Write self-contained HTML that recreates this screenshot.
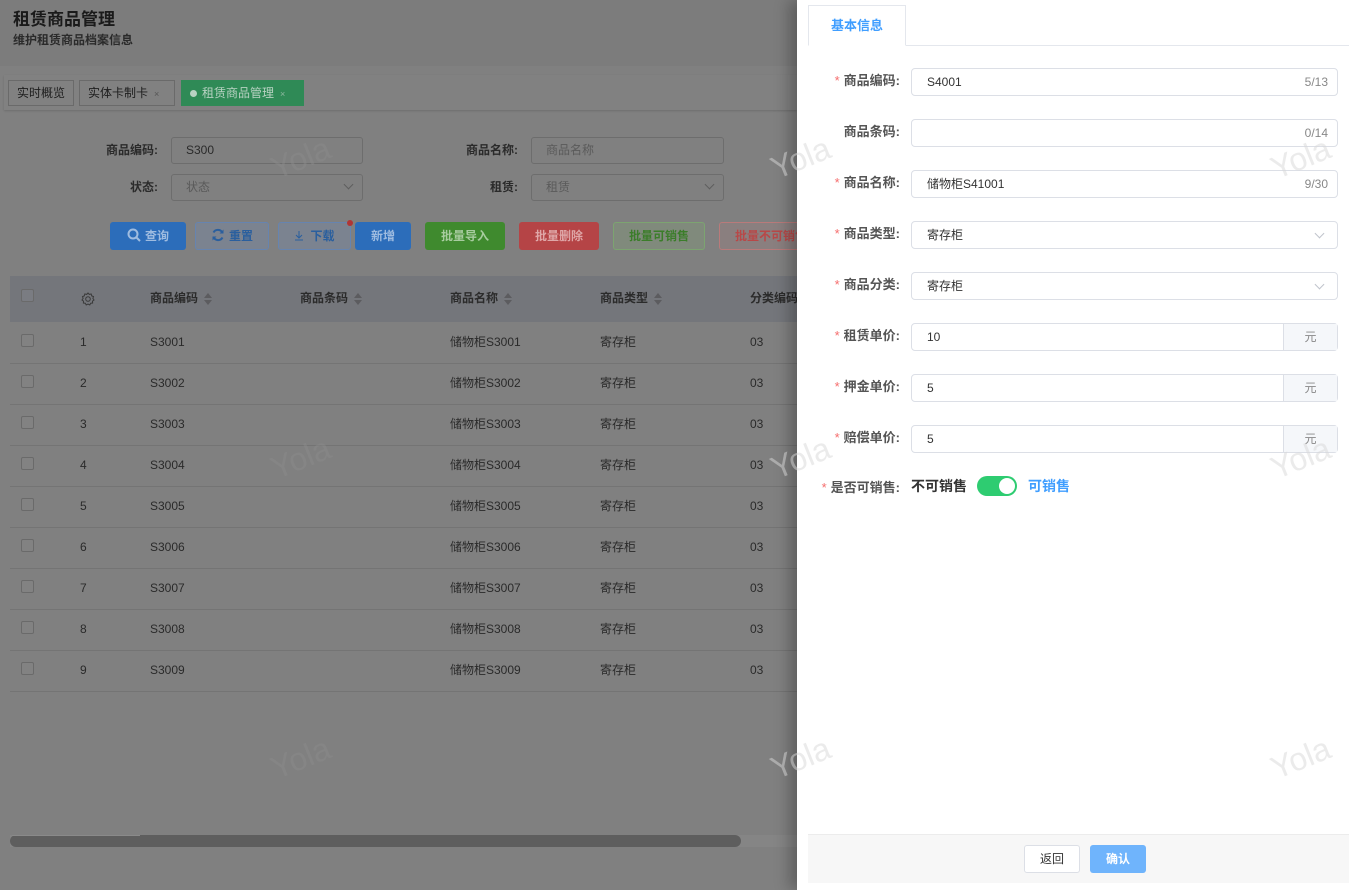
<!DOCTYPE html>
<html><head><meta charset="utf-8">
<style>
*{box-sizing:border-box;margin:0;padding:0}
body{width:1349px;height:890px;overflow:hidden;background:#808080;font-family:"Liberation Sans","Noto Sans CJK SC",sans-serif;position:relative;color:#222}
.a{position:absolute}
.hdr{left:0;top:0;width:797px;height:66px;background:#7c7c7c}
.t1{left:13px;top:9px;font-size:17px;line-height:22px;font-weight:bold;color:#1a1a1a}
.t2{left:13px;top:33px;font-size:12px;line-height:14px;font-weight:bold;color:#2a2a2a}
.tabbar{left:4px;top:75px;width:793px;height:35px;background:#818181;box-shadow:0 1px 2px rgba(0,0,0,.15)}
.tab{top:80px;height:26px;border:1px solid #6a6a6a;font-size:12px;line-height:24px;padding-left:8px;color:#1e1e1e}
.tab .x{font-size:9px;color:#555;margin-left:6px}
.lbl{font-size:12px;line-height:14px;font-weight:bold;color:#2a2a2a;text-align:right;width:80px}
.inp{height:27px;border:1px solid #6d6d6d;border-radius:3px;font-size:12px;line-height:25px;padding-left:14px;color:#2a2a2a}
.ph{color:#5a5a5a}
.chev{position:absolute;right:10px;top:6px;width:7px;height:7px;border-right:1px solid #5e5e5e;border-bottom:1px solid #5e5e5e;transform:rotate(45deg)}
.btn{top:222px;height:28px;border-radius:3px;font-size:12px;font-weight:bold;line-height:26px;text-align:center;border:1px solid transparent}
.th{top:276px;left:10px;width:787px;height:46px;background:#74767b}
.col{font-size:12px;line-height:14px;height:14px;color:#2a2a2a;white-space:nowrap}
.hc{top:291px;font-size:12px;line-height:14px;font-weight:bold;color:#2b2b2b}
.sort{display:inline-block;vertical-align:middle;margin-left:6px;width:8px;height:12px;position:relative}
.sort:before,.sort:after{content:"";position:absolute;left:0;border-left:4px solid transparent;border-right:4px solid transparent}
.sort:before{top:0;border-bottom:5px solid #5c5c5f}
.sort:after{bottom:0;border-top:5px solid #5c5c5f}
.cb{width:13px;height:13px;border:1px solid #6a6a6a;border-radius:2px;background:#828282}
.rl{left:10px;width:787px;height:1px;background:#747474}
.wm{font-size:32px;line-height:36px;color:rgba(140,140,140,.45);transform:rotate(-22deg);font-family:"Liberation Sans",sans-serif}
.drawer{left:797px;top:0;width:552px;height:890px;background:#fff;box-shadow:-8px 0 14px rgba(0,0,0,.25)}
.fl{font-size:13px;line-height:16px;font-weight:bold;color:#555;text-align:right;width:110px;left:790px}
.fl b{color:#f56c6c;font-weight:normal;margin-right:4px}
.fi{left:911px;width:427px;height:28px;border:1px solid #dcdfe6;border-radius:4px;font-size:12px;line-height:26px;padding-left:15px;color:#333;background:#fff}
.cnt{position:absolute;right:9px;top:0;color:#888;font-size:12px}
.dchev{position:absolute;right:14px;top:8px;width:7px;height:7px;border-right:1px solid #c0c4cc;border-bottom:1px solid #c0c4cc;transform:rotate(45deg)}
.suf{position:absolute;right:0;top:0;width:54px;height:26px;background:#f5f7fa;border-left:1px solid #dcdfe6;text-align:center;color:#888;font-size:12px}
.dwm{color:rgba(215,215,215,.5)}
</style></head><body>
<div class="a hdr"></div>
<div class="a t1">租赁商品管理</div>
<div class="a t2">维护租赁商品档案信息</div>
<div class="a tabbar"></div>
<div class="a tab" style="left:8px;width:66px">实时概览</div>
<div class="a tab" style="left:79px;width:96px">实体卡制卡<span class="x">×</span></div>
<div class="a tab" style="left:181px;width:123px;background:#2f8a56;border-color:#2f8a56;color:#b8d2c2"><span style="display:inline-block;width:7px;height:7px;border-radius:50%;background:#b8d2c2;margin-right:5px"></span>租赁商品管理<span class="x" style="color:#8fb9a0">×</span></div>

<div class="a lbl" style="left:78px;top:143px">商品编码:</div>
<div class="a inp" style="left:171px;top:137px;width:192px">S300</div>
<div class="a lbl" style="left:438px;top:143px">商品名称:</div>
<div class="a inp ph" style="left:531px;top:137px;width:193px">商品名称</div>
<div class="a lbl" style="left:78px;top:180px">状态:</div>
<div class="a inp ph" style="left:171px;top:174px;width:192px">状态<i class="chev"></i></div>
<div class="a lbl" style="left:438px;top:180px">租赁:</div>
<div class="a inp ph" style="left:531px;top:174px;width:193px">租赁<i class="chev"></i></div>

<div class="a btn" style="left:110px;width:76px;background:#2c6dba;color:#9fbce0"><svg width="14" height="14" viewBox="0 0 14 14" style="vertical-align:-2px;margin-right:4px"><circle cx="6" cy="6" r="4.5" fill="none" stroke="#9fbce0" stroke-width="2"/><path d="M9.5 9.5L13 13" stroke="#9fbce0" stroke-width="2"/></svg>查询</div>
<div class="a btn" style="left:195px;width:74px;background:#7b8390;border-color:#6684b0;color:#2a5f9e"><svg width="14" height="14" viewBox="0 0 14 14" style="vertical-align:-2px;margin-right:4px"><path d="M11.5 5A5 5 0 0 0 2.5 4.5M2.5 9a5 5 0 0 0 9 .5" fill="none" stroke="#2a5f9e" stroke-width="2"/><path d="M12.5 1.5v4h-4z M1.5 12.5v-4h4z" fill="#2a5f9e"/></svg>重置</div>
<div class="a btn" style="left:278px;width:73px;background:#7b8390;border-color:#6684b0;color:#2a5f9e"><svg width="10" height="11" viewBox="0 0 10 11" style="vertical-align:-1px;margin-right:6px"><path d="M5 1v7M2 5l3 3 3-3M1 10h8" fill="none" stroke="#2a5f9e" stroke-width="1"/></svg>下载</div>
<div class="a" style="left:347px;top:220px;width:6px;height:6px;border-radius:50%;background:#b03535"></div>
<div class="a btn" style="left:355px;width:56px;background:#2c6dba;color:#9fbce0">新增</div>
<div class="a btn" style="left:425px;width:80px;background:#3f8a2e;color:#a8cca0">批量导入</div>
<div class="a btn" style="left:519px;width:80px;background:#b54446;color:#dfa7a8">批量删除</div>
<div class="a btn" style="left:613px;width:92px;background:#808a7c;border-color:#7ca470;color:#3b7d2a">批量可销售</div>
<div class="a btn" style="left:719px;width:90px;background:#8a7f7f;border-color:#b97a7a;color:#b84848;text-align:left;padding-left:15px;overflow:hidden;white-space:nowrap">批量不可销售</div>

<div class="a th"></div>
<div class="a cb" style="left:21px;top:289px;background:#7a7c82"></div>
<svg class="a" style="left:81px;top:292px" width="14" height="14" viewBox="0 0 14 14"><circle cx="7" cy="7" r="2.3" fill="none" stroke="#3a3a3a" stroke-width="1"/><path d="M7 1l1.3 1.4 1.9-.4.5 1.9 1.8.7-.6 1.8 1.1 1.6-1.5 1.1.1 1.9-1.9.2-.9 1.7L7 12l-1.8.9-.9-1.7-1.9-.2.1-1.9L1 8l1.1-1.6-.6-1.8 1.8-.7.5-1.9 1.9.4z" fill="none" stroke="#3a3a3a" stroke-width="1"/></svg>
<div class="a hc" style="left:150px">商品编码<i class="sort"></i></div>
<div class="a hc" style="left:300px">商品条码<i class="sort"></i></div>
<div class="a hc" style="left:450px">商品名称<i class="sort"></i></div>
<div class="a hc" style="left:600px">商品类型<i class="sort"></i></div>
<div class="a hc" style="left:750px">分类编码</div>

<div class="a cb" style="left:21px;top:334px"></div><div class="a col" style="left:80px;top:335px">1</div><div class="a col" style="left:150px;top:335px">S3001</div><div class="a col" style="left:450px;top:335px">储物柜S3001</div><div class="a col" style="left:600px;top:335px">寄存柜</div><div class="a col" style="left:750px;top:335px">03</div><div class="a rl" style="top:363px"></div>
<div class="a cb" style="left:21px;top:375px"></div><div class="a col" style="left:80px;top:376px">2</div><div class="a col" style="left:150px;top:376px">S3002</div><div class="a col" style="left:450px;top:376px">储物柜S3002</div><div class="a col" style="left:600px;top:376px">寄存柜</div><div class="a col" style="left:750px;top:376px">03</div><div class="a rl" style="top:404px"></div>
<div class="a cb" style="left:21px;top:416px"></div><div class="a col" style="left:80px;top:417px">3</div><div class="a col" style="left:150px;top:417px">S3003</div><div class="a col" style="left:450px;top:417px">储物柜S3003</div><div class="a col" style="left:600px;top:417px">寄存柜</div><div class="a col" style="left:750px;top:417px">03</div><div class="a rl" style="top:445px"></div>
<div class="a cb" style="left:21px;top:457px"></div><div class="a col" style="left:80px;top:458px">4</div><div class="a col" style="left:150px;top:458px">S3004</div><div class="a col" style="left:450px;top:458px">储物柜S3004</div><div class="a col" style="left:600px;top:458px">寄存柜</div><div class="a col" style="left:750px;top:458px">03</div><div class="a rl" style="top:486px"></div>
<div class="a cb" style="left:21px;top:498px"></div><div class="a col" style="left:80px;top:499px">5</div><div class="a col" style="left:150px;top:499px">S3005</div><div class="a col" style="left:450px;top:499px">储物柜S3005</div><div class="a col" style="left:600px;top:499px">寄存柜</div><div class="a col" style="left:750px;top:499px">03</div><div class="a rl" style="top:527px"></div>
<div class="a cb" style="left:21px;top:539px"></div><div class="a col" style="left:80px;top:540px">6</div><div class="a col" style="left:150px;top:540px">S3006</div><div class="a col" style="left:450px;top:540px">储物柜S3006</div><div class="a col" style="left:600px;top:540px">寄存柜</div><div class="a col" style="left:750px;top:540px">03</div><div class="a rl" style="top:568px"></div>
<div class="a cb" style="left:21px;top:580px"></div><div class="a col" style="left:80px;top:581px">7</div><div class="a col" style="left:150px;top:581px">S3007</div><div class="a col" style="left:450px;top:581px">储物柜S3007</div><div class="a col" style="left:600px;top:581px">寄存柜</div><div class="a col" style="left:750px;top:581px">03</div><div class="a rl" style="top:609px"></div>
<div class="a cb" style="left:21px;top:621px"></div><div class="a col" style="left:80px;top:622px">8</div><div class="a col" style="left:150px;top:622px">S3008</div><div class="a col" style="left:450px;top:622px">储物柜S3008</div><div class="a col" style="left:600px;top:622px">寄存柜</div><div class="a col" style="left:750px;top:622px">03</div><div class="a rl" style="top:650px"></div>
<div class="a cb" style="left:21px;top:662px"></div><div class="a col" style="left:80px;top:663px">9</div><div class="a col" style="left:150px;top:663px">S3009</div><div class="a col" style="left:450px;top:663px">储物柜S3009</div><div class="a col" style="left:600px;top:663px">寄存柜</div><div class="a col" style="left:750px;top:663px">03</div><div class="a rl" style="top:691px"></div>

<div class="a" style="left:10px;top:835px;width:787px;height:12px;background:#858585"></div>
<div class="a" style="left:10px;top:835px;width:731px;height:12px;background:#5e5e5e;border-radius:6px"></div>
<div class="a" style="left:12px;top:835px;width:128px;height:1px;background:#8a8a8a"></div>

<div class="a wm" style="left:270px;top:140px">Yola</div>
<div class="a wm" style="left:270px;top:440px">Yola</div>
<div class="a wm" style="left:270px;top:740px">Yola</div>

<div class="a drawer"></div>
<div class="a" style="left:808px;top:45px;width:541px;height:1px;background:#e4e7ed"></div>
<div class="a" style="left:808px;top:5px;width:98px;height:41px;border:1px solid #e4e7ed;border-bottom:1px solid #fff;background:#fff;color:#409eff;font-size:13px;font-weight:bold;text-align:center;line-height:40px">基本信息</div>

<div class="a fl" style="top:73px"><b>*</b>商品编码:</div>
<div class="a fi" style="top:68px">S4001<span class="cnt">5/13</span></div>
<div class="a fl" style="top:124px">商品条码:</div>
<div class="a fi" style="top:119px"><span class="cnt">0/14</span></div>
<div class="a fl" style="top:175px"><b>*</b>商品名称:</div>
<div class="a fi" style="top:170px">储物柜S41001<span class="cnt">9/30</span></div>
<div class="a fl" style="top:226px"><b>*</b>商品类型:</div>
<div class="a fi" style="top:221px">寄存柜<i class="dchev"></i></div>
<div class="a fl" style="top:277px"><b>*</b>商品分类:</div>
<div class="a fi" style="top:272px">寄存柜<i class="dchev"></i></div>
<div class="a fl" style="top:328px"><b>*</b>租赁单价:</div>
<div class="a fi" style="top:323px">10<span class="suf">元</span></div>
<div class="a fl" style="top:379px"><b>*</b>押金单价:</div>
<div class="a fi" style="top:374px">5<span class="suf">元</span></div>
<div class="a fl" style="top:430px"><b>*</b>赔偿单价:</div>
<div class="a fi" style="top:425px">5<span class="suf">元</span></div>
<div class="a fl" style="top:480px"><b>*</b>是否可销售:</div>
<div class="a" style="left:911px;top:478px;font-size:14px;line-height:16px;font-weight:bold;color:#333">不可销售</div>
<div class="a" style="left:977px;top:476px;width:40px;height:20px;border-radius:10px;background:#2ecc71"></div>
<div class="a" style="left:999px;top:478px;width:16px;height:16px;border-radius:50%;background:#fff"></div>
<div class="a" style="left:1028px;top:478px;font-size:14px;line-height:16px;font-weight:bold;color:#409eff">可销售</div>

<div class="a wm dwm" style="left:770px;top:140px">Yola</div>
<div class="a wm dwm" style="left:1270px;top:140px">Yola</div>
<div class="a wm dwm" style="left:770px;top:440px">Yola</div>
<div class="a wm dwm" style="left:1270px;top:440px">Yola</div>
<div class="a wm dwm" style="left:770px;top:740px">Yola</div>
<div class="a wm dwm" style="left:1270px;top:740px">Yola</div>

<div class="a" style="left:808px;top:834px;width:541px;height:49px;background:#f7f7f7;border-top:1px solid #ececec"></div>
<div class="a" style="left:1024px;top:845px;width:56px;height:28px;border:1px solid #dcdfe6;border-radius:3px;background:#fff;font-size:12px;text-align:center;line-height:26px;color:#333">返回</div>
<div class="a" style="left:1090px;top:845px;width:56px;height:28px;border-radius:3px;background:#6fb4fc;font-size:12px;font-weight:bold;text-align:center;line-height:28px;color:#fff">确认</div>
</body></html>
